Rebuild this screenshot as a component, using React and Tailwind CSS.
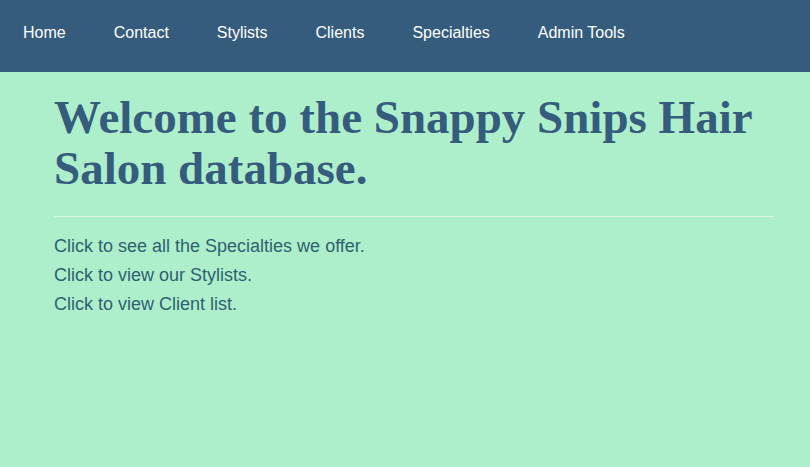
const links = ['Home', 'Contact', 'Stylists', 'Clients', 'Specialties', 'Admin Tools'];

const App = () => {
  return (
    <div className="min-h-[467px] bg-[#adefcb]">
      {/* Navbar */}
      <nav className="h-[72px] bg-[#355c7d] flex items-start pt-[23px]">
        {links.map((link) => (
          <a
            key={link}
            href="#"
            className="px-6 first:pl-[23px] text-white text-[16px] leading-[20px] font-['Liberation_Sans',Arial,sans-serif]"
          >
            {link}
          </a>
        ))}
      </nav>

      {/* Content */}
      <div className="mx-[54px] w-[720px] pt-[20px]">
        <h1 className="text-[#355c7d] font-bold text-[47px] leading-[51px] font-['Liberation_Serif','Times_New_Roman',serif]">
          Welcome to the Snappy Snips Hair Salon database.
        </h1>
        <hr className="mt-[22px] mb-[15px] border-t border-[#d6f7e4]" />
        <div className="text-[#2f5f70] text-[18px] leading-[29px] font-['Liberation_Sans',Arial,sans-serif]">
          <p>Click to see all the Specialties we offer.</p>
          <p>Click to view our Stylists.</p>
          <p>Click to view Client list.</p>
        </div>
      </div>
    </div>
  );
};

export default App;
